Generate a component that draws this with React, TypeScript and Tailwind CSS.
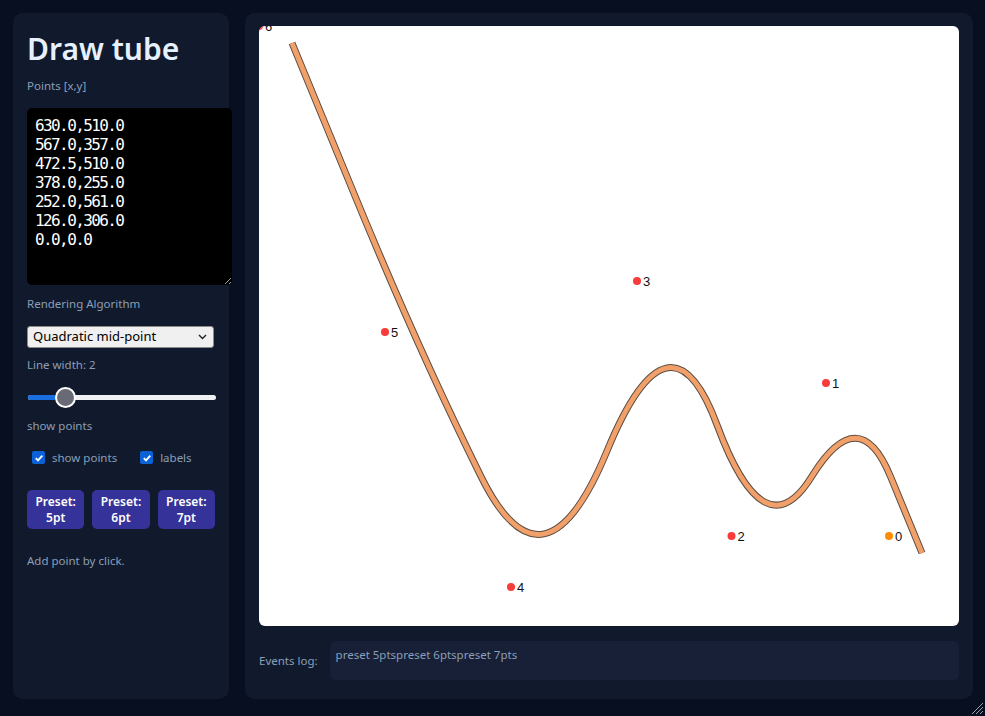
import { useState } from 'react';

type Pt = [number, number];

const PUNTOS: Pt[] = [
  [630, 510],
  [567, 357],
  [472.5, 510],
  [378, 255],
  [252, 561],
  [126, 306],
  [0, 0],
];

// curva "quadratic mid-point" desenhada com deslocamento do tubo
const caminhoTubo = (pts: Pt[], dx: number, dy: number) => {
  const p = pts.map(([x, y]) => [x + dx, y + dy] as Pt);
  const mid = (a: Pt, b: Pt): Pt => [(a[0] + b[0]) / 2, (a[1] + b[1]) / 2];
  const m01 = mid(p[0], p[1]);
  let d = `M ${p[0][0]} ${p[0][1]} L ${m01[0]} ${m01[1]}`;
  for (let i = 1; i < p.length - 1; i++) {
    const m = mid(p[i], p[i + 1]);
    d += ` Q ${p[i][0]} ${p[i][1]} ${m[0]} ${m[1]}`;
  }
  const last = p[p.length - 1];
  d += ` L ${last[0]} ${last[1]}`;
  return d;
};

const Checkbox = ({ label }: { label: string }) => (
  <label className="flex items-center gap-[7px]">
    <span className="flex h-[13px] w-[13px] items-center justify-center rounded-[2px] bg-[#0b62d6]">
      <svg width="10" height="10" viewBox="0 0 10 10">
        <path d="M1.8 5.2 L4 7.4 L8.3 2.6" fill="none" stroke="white" strokeWidth="1.8" />
      </svg>
    </span>
    <span>{label}</span>
  </label>
);

const PresetButton = ({ n }: { n: number }) => (
  <button
    type="button"
    className="flex h-[39px] flex-col items-center justify-center rounded-[5px] bg-[#35329a] text-[12px] font-semibold leading-[16px] text-white"
  >
    <span className="leading-[16px]">Preset:</span>
    <span className="leading-[16px]">{n}pt</span>
  </button>
);

export default function App() {
  const [texto] = useState(PUNTOS.map(([x, y]) => `${x.toFixed(1)},${y.toFixed(1)}`).join('\n'));
  const d = caminhoTubo(PUNTOS, 33, 17);

  return (
    <div
      className="relative flex h-screen gap-4 bg-[#070f20] px-[13px] pb-[17px] pt-[13px] text-[11.5px] text-[#8b9fb8]"
      style={{ fontFamily: '"Noto Sans", "Open Sans", sans-serif' }}
    >
      {/* Painel lateral */}
      <aside className="flex w-[216px] shrink-0 flex-col rounded-[10px] bg-[#111a2c] px-[14px] pt-[16px]">
        <h1 className="text-[30px] font-semibold leading-[40px] text-[#e6f1ff]">Draw tube</h1>
        <p className="mt-[9px] leading-[16px]">Points [x,y]</p>
        <textarea
          readOnly
          value={texto}
          className="mt-[14px] h-[177px] w-[205px] shrink-0 resize-y rounded-[5px] bg-black px-[8px] pt-[8px] text-[16px] leading-[19px] tracking-[-1.6px] text-white outline-none"
          style={{ fontFamily: '"DejaVu Sans Mono", monospace' }}
        />
        <p className="mt-[11px] leading-[16px]">Rendering Algorithm</p>
        <div className="relative mt-[14px] flex h-[22px] w-[187px] items-center rounded-[3px] border border-[#8b8b8b] bg-[#f0f0f0] pl-[5px] text-[13px] text-black">
          <span>Quadratic mid-point</span>
          <svg className="absolute right-[6px] top-[7px]" width="9" height="6" viewBox="0 0 9 6">
            <path d="M1 1 L4.5 4.5 L8 1" fill="none" stroke="#222" strokeWidth="1.4" />
          </svg>
        </div>
        <p className="mt-[9px] leading-[16px]">Line width: 2</p>
        <div className="relative mt-[14px] h-[20px] w-[189px] shrink-0">
          <div className="absolute left-[1px] right-0 top-[8px] h-[5px] rounded-full bg-[#eef0f3]" />
          <div className="absolute left-[1px] top-[8px] h-[5px] w-[38px] rounded-full bg-[#1a6fe0]" />
          <div className="absolute left-[28px] top-0 h-[21px] w-[21px] rounded-full border-2 border-white bg-[#686b76]" />
        </div>
        <p className="mt-[11px] leading-[16px]">show points</p>
        <div className="ml-[5px] mt-[15px] flex gap-[23px]">
          <Checkbox label="show points" />
          <Checkbox label="labels" />
        </div>
        <div className="mt-[24px] grid w-[188px] grid-cols-3 gap-[8px]">
          <PresetButton n={5} />
          <PresetButton n={6} />
          <PresetButton n={7} />
        </div>
        <p className="mt-[24px] leading-[16px]">Add point by click.</p>
      </aside>

      {/* Área principal */}
      <main className="flex flex-1 flex-col rounded-[10px] bg-[#111a2c] px-[14px] pt-[13px]">
        <div className="h-[600px] w-full overflow-hidden rounded-[6px] bg-white">
          <svg width="700" height="600" viewBox="0 0 700 600">
            <path d={d} fill="none" stroke="#5a4c42" strokeWidth="7" />
            <path d={d} fill="none" stroke="#f2a06a" strokeWidth="5" />
            {PUNTOS.map(([x, y], i) => (
              <g key={i}>
                <circle cx={x} cy={y} r="4" fill={i === 0 ? '#ff8c00' : '#f83b3b'} />
                <text
                  x={x + 6}
                  y={y + 5}
                  fontSize="13"
                  fill="#111"
                  style={{ fontFamily: '"Liberation Sans", Arial, sans-serif' }}
                >
                  {i}
                </text>
              </g>
            ))}
          </svg>
        </div>
        <div className="mt-[15px] flex items-center gap-[12px]">
          <span className="leading-[16px]">Events log:</span>
          <div className="h-[39px] flex-1 rounded-[6px] bg-[#172036] px-[6px] pt-[6px] leading-[16px]">
            preset 5ptspreset 6ptspreset 7pts
          </div>
        </div>
      </main>

      {/* alça de redimensionar */}
      <svg className="absolute bottom-[1px] right-[1px]" width="13" height="13" viewBox="0 0 13 13">
        <path d="M12 1 L1 12 M12 5 L5 12 M12 9 L9 12" stroke="#9aa3b2" strokeWidth="1" />
      </svg>
    </div>
  );
}
